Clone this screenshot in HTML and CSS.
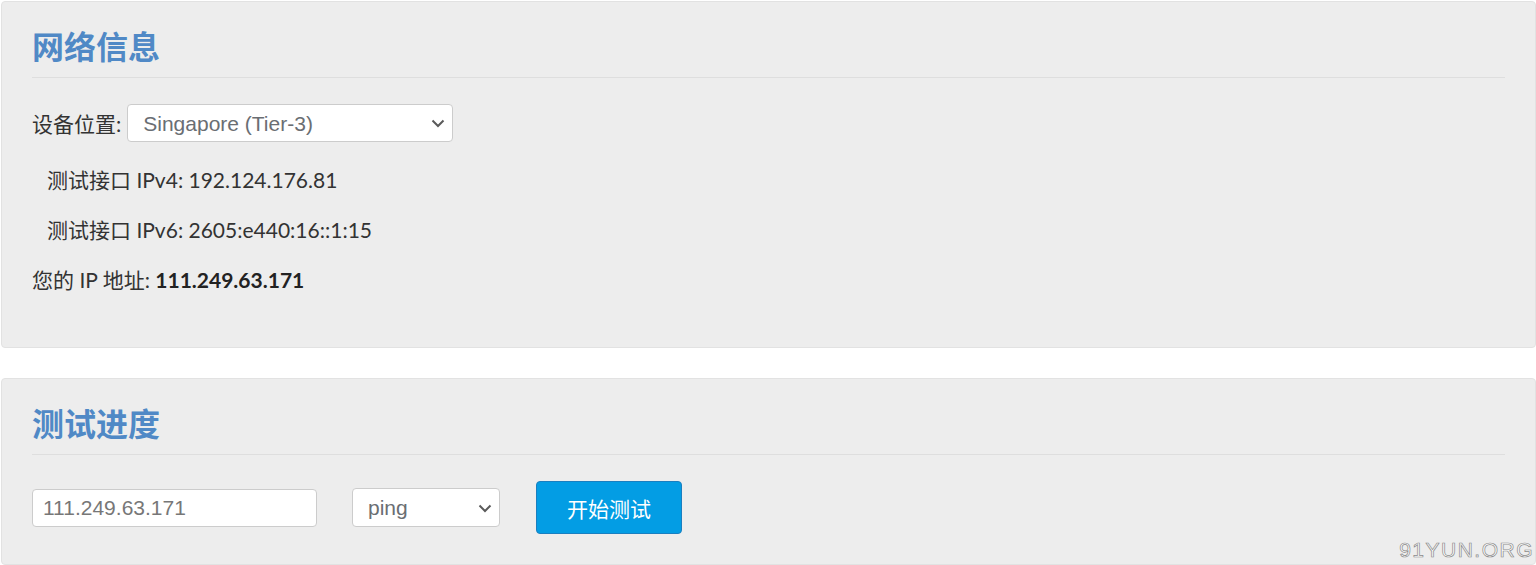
FILE: index.html
```html
<!DOCTYPE html>
<html lang="zh-CN">
<head>
    <meta charset="utf-8" />
    <title>网络测试</title>
    <link rel="stylesheet" href="styles.css">
</head>
<body>
    <div class="page">

        <!-- network info -->
        <div class="panel">
            <h2 class="panel-title">网络信息</h2>

            <div class="location-row">
                <label class="field-label" for="location">设备位置:</label>
                <div class="select-wrap select-location">
                    <select id="location" class="form-select">
                        <option>Singapore (Tier-3)</option>
                    </select>
                    <svg class="chevron" width="14" height="9" viewBox="0 0 14 9">
                        <path d="M1.5 1.5 L7 7 L12.5 1.5" fill="none" stroke="#5a5a5a" stroke-width="2" />
                    </svg>
                </div>
            </div>

            <p class="info-line indent">测试接口 IPv4: 192.124.176.81</p>
            <p class="info-line indent">测试接口 IPv6: 2605:e440:16::1:15</p>
            <p class="info-line">您的 IP 地址: <strong>111.249.63.171</strong></p>
        </div>

        <!-- test progress -->
        <div class="panel">
            <h2 class="panel-title">测试进度</h2>

            <div class="controls">
                <input class="form-input" type="text" value="111.249.63.171" />
                <div class="select-wrap select-method">
                    <select class="form-select">
                        <option>ping</option>
                    </select>
                    <svg class="chevron" width="14" height="9" viewBox="0 0 14 9">
                        <path d="M1.5 1.5 L7 7 L12.5 1.5" fill="none" stroke="#5a5a5a" stroke-width="2" />
                    </svg>
                </div>
                <button class="btn-start" type="button">开始测试</button>
            </div>
        </div>

        <div class="watermark">91YUN.ORG</div>
    </div>
</body>
</html>
```

FILE: styles.css
```css
body
{
    margin: 0;
    font-family: "Lato", "Noto Sans CJK SC", sans-serif;
    font-size: 21px;
    color: #333333;
    background-color: #FFFFFF;
}
.page
{
    position: relative;
    height: 565px;
    padding: 1px 0 0 1px;
    box-sizing: border-box;
}
.panel
{
    background-color: #EDEDED;
    border: 1px solid #E2E2E2;
    border-radius: 4px;
    padding: 25px 30px 55px 30px;
}
.panel + .panel
{
    margin-top: 30px;
    padding-bottom: 30px;
}
.panel-title
{
    margin: 0;
    font-size: 32px;
    line-height: 40px;
    font-weight: bold;
    color: #5089C6;
    padding-bottom: 10px;
    border-bottom: 1px solid #DEDEDE;
}
.location-row
{
    display: flex;
    align-items: center;
    margin-top: 26px;
    height: 38px;
}
.field-label
{
    margin-right: 6px;
}
.select-wrap
{
    position: relative;
}
.form-select
{
    -webkit-appearance: none;
    appearance: none;
    display: block;
    box-sizing: border-box;
    width: 100%;
    height: 100%;
    margin: 0;
    padding: 0 36px 0 15px;
    font-family: "Liberation Sans", Arial, sans-serif;
    font-size: 21px;
    color: #6A6E73;
    background-color: #FFFFFF;
    border: 1px solid #CCCCCC;
    border-radius: 4px;
    outline: none;
}
.select-wrap .chevron
{
    position: absolute;
    right: 8px;
    top: 50%;
    margin-top: -4px;
    pointer-events: none;
}
.select-location
{
    width: 326px;
    height: 38px;
}
.select-method
{
    width: 148px;
    height: 39px;
    margin-right: 36px;
}
.info-line
{
    margin: 26px 0 0 0;
    line-height: 24px;
}
.info-line.indent
{
    padding-left: 15px;
}
.info-line strong
{
    color: #222222;
}
.controls
{
    display: flex;
    align-items: center;
    margin-top: 26px;
}
.form-input
{
    box-sizing: border-box;
    width: 285px;
    height: 38px;
    margin: 0 35px 0 0;
    padding: 0 10px;
    font-family: "Liberation Sans", Arial, sans-serif;
    font-size: 21px;
    color: #777777;
    background-color: #FFFFFF;
    border: 1px solid #CCCCCC;
    border-radius: 4px;
    outline: none;
}
.btn-start
{
    box-sizing: border-box;
    width: 146px;
    height: 53px;
    font-family: "Noto Sans CJK SC", sans-serif;
    font-size: 21px;
    color: #FFFFFF;
    background-color: #039DE4;
    border: 1px solid #1A7FC0;
    border-radius: 4px;
}
.watermark
{
    position: absolute;
    right: 2px;
    bottom: 3px;
    font-family: "Liberation Sans", Arial, sans-serif;
    font-size: 21px;
    letter-spacing: 1.5px;
    color: #FFFFFF;
    -webkit-text-stroke: 0.7px #8A8A8A;
}
```
